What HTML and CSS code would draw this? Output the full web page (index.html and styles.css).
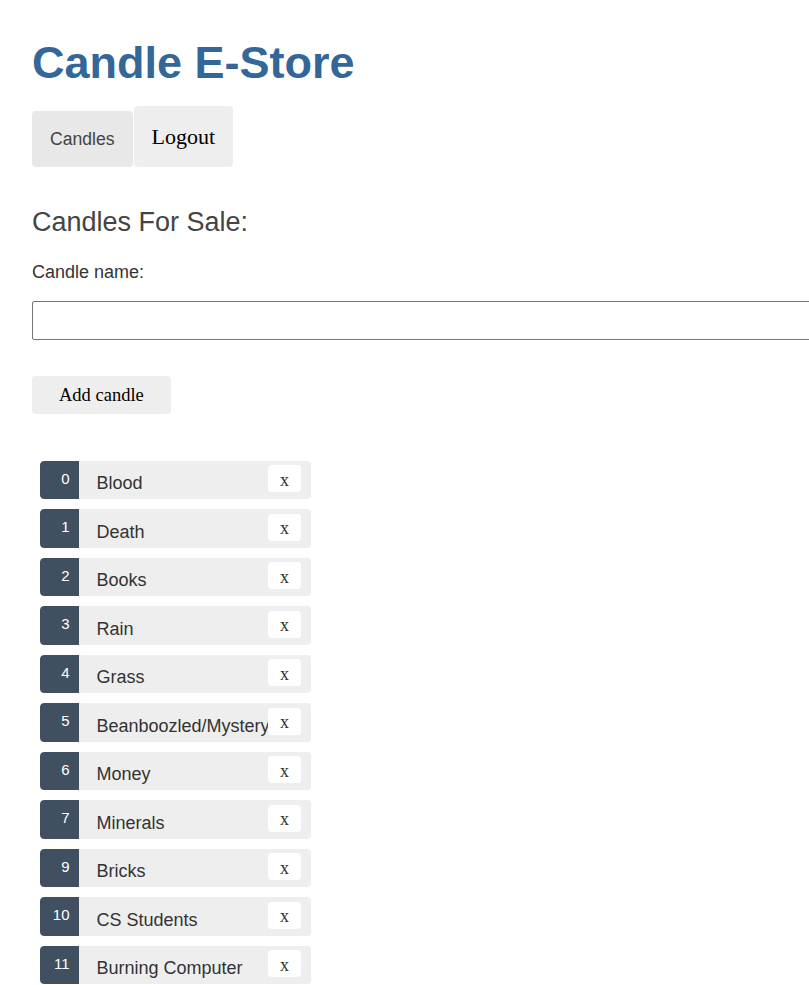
FILE: index.html
```html
<!DOCTYPE html>
<html lang="en">
<head>
<meta charset="utf-8">
<title>Candle E-Store</title>
<link rel="stylesheet" href="styles.css">
</head>
<body>
<div class="page">
  <h1 class="title">Candle E-Store</h1>
  <nav class="nav">
    <a class="nav-link" href="#">Candles</a>
    <button class="nav-button" type="button">Logout</button>
  </nav>
  <h2 class="section-title">Candles For Sale:</h2>
  <label class="field-label" for="candle-name">Candle name:</label>
  <input class="name-input" id="candle-name" type="text">
  <button class="add-button" type="button">Add candle</button>
  <ul class="candles">
    <li class="candle"><span class="badge">0</span><span class="name">Blood</span><button class="delete" type="button">x</button></li>
    <li class="candle"><span class="badge">1</span><span class="name">Death</span><button class="delete" type="button">x</button></li>
    <li class="candle"><span class="badge">2</span><span class="name">Books</span><button class="delete" type="button">x</button></li>
    <li class="candle"><span class="badge">3</span><span class="name">Rain</span><button class="delete" type="button">x</button></li>
    <li class="candle"><span class="badge">4</span><span class="name">Grass</span><button class="delete" type="button">x</button></li>
    <li class="candle"><span class="badge">5</span><span class="name">Beanboozled/Mystery</span><button class="delete" type="button">x</button></li>
    <li class="candle"><span class="badge">6</span><span class="name">Money</span><button class="delete" type="button">x</button></li>
    <li class="candle"><span class="badge">7</span><span class="name">Minerals</span><button class="delete" type="button">x</button></li>
    <li class="candle"><span class="badge">9</span><span class="name">Bricks</span><button class="delete" type="button">x</button></li>
    <li class="candle"><span class="badge">10</span><span class="name">CS Students</span><button class="delete" type="button">x</button></li>
    <li class="candle"><span class="badge">11</span><span class="name">Burning Computer</span><button class="delete" type="button">x</button></li>
  </ul>
</div>
</body>
</html>
```

FILE: styles.css
```css
html, body {
  overflow: hidden;
}

body {
  margin: 0;
  font-family: "Liberation Sans", Arial, sans-serif;
  color: #333;
  background: #fff;
}

.page {
  padding: 32px;
  display: flex;
  flex-direction: column;
  align-items: flex-start;
}

.title {
  margin: 5px 0 0;
  font-size: 45px;
  font-weight: bold;
  color: #336699;
  line-height: 51px;
}

.nav {
  display: flex;
  align-items: flex-end;
  gap: 1px;
  margin-top: 18px;
}

.nav-link {
  display: block;
  font-size: 17.6px;
  line-height: 20px;
  padding: 18px 18px;
  color: #444;
  background: #e8e8e8;
  border-radius: 4px;
  text-decoration: none;
}

.nav-button {
  font-family: "Liberation Serif", "Times New Roman", serif;
  font-size: 22px;
  line-height: 25px;
  padding: 18px 18px;
  color: #000;
  background: #eee;
  border: none;
  border-radius: 4px;
}

.section-title {
  margin: 40px 0 0;
  font-size: 27px;
  line-height: 30px;
  font-weight: normal;
  color: #444;
}

.field-label {
  display: block;
  margin-top: 25px;
  font-size: 18px;
  line-height: 21px;
  color: #333;
}

.name-input {
  margin-top: 18px;
  width: 820px;
  height: 39px;
  box-sizing: border-box;
  border: 1px solid #767676;
  border-radius: 2px;
  padding: 0 8px;
  font-size: 16px;
}

.add-button {
  margin-top: 36px;
  font-family: "Liberation Serif", "Times New Roman", serif;
  font-size: 18.5px;
  line-height: 22px;
  padding: 8px 27px;
  color: #000;
  background: #eee;
  border: none;
  border-radius: 4px;
}

.candles {
  list-style: none;
  margin: 46.5px 0 0 8px;
  padding: 0;
  display: flex;
  flex-direction: column;
  gap: 10px;
}

.candle {
  position: relative;
  display: flex;
  align-items: flex-start;
  width: 271px;
  height: 38.5px;
  background: #eee;
  border-radius: 4px;
  overflow: hidden;
}

.badge {
  box-sizing: border-box;
  width: 38.5px;
  height: 100%;
  padding: 10px 9px 0 0;
  font-size: 15px;
  line-height: 15px;
  text-align: right;
  color: #fff;
  background: #405061;
  border-radius: 4px 0 0 4px;
  flex-shrink: 0;
}

.name {
  margin-left: 18px;
  padding-top: 12.5px;
  font-size: 18px;
  line-height: 20px;
  color: #333;
  white-space: nowrap;
}

.delete {
  position: absolute;
  top: 4.5px;
  right: 10px;
  width: 33px;
  height: 27px;
  padding: 3px 0 0;
  border: none;
  border-radius: 4px;
  background: #fff;
  color: #333;
  font-family: "Liberation Serif", "Times New Roman", serif;
  font-size: 18px;
  line-height: 17px;
}
```
